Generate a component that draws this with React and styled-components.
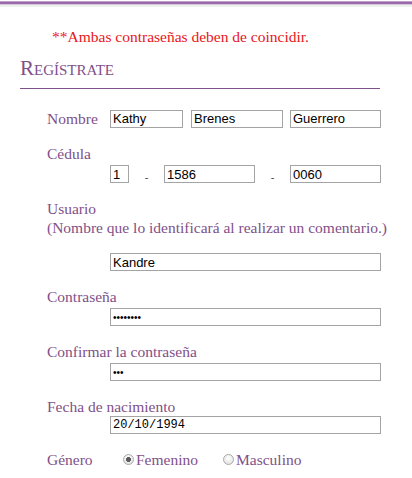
import React from 'react';
import styled, { createGlobalStyle } from 'styled-components';

const GlobalStyle = createGlobalStyle`
  html, body { margin: 0; padding: 0; background: #fff; }
  body { font-family: "Liberation Serif", "Times New Roman", serif; }
`;

const purple = '#7f5089';

export default function App() {
  return (
    <Page>
      <GlobalStyle />
      <TopBar />
      <Notice>**Ambas contraseñas deben de coincidir.</Notice>
      <Title>Regístrate</Title>
      <Form>
        <InlineRow>
          <Label $inline>Nombre</Label>
          <Input $w={73} defaultValue="Kathy" />
          <Input $w={92} $ml={8} defaultValue="Brenes" />
          <Input $w={91} $ml={7} defaultValue="Guerrero" />
        </InlineRow>

        <Group>
          <Label>Cédula</Label>
          <FieldRow>
            <Input $w={19} defaultValue="1" />
            <Dash>-</Dash>
            <Input $w={91} defaultValue="1586" />
            <Dash>-</Dash>
            <Input $w={91} defaultValue="0060" />
          </FieldRow>
        </Group>

        <Group>
          <Label>Usuario</Label>
          <Label>(Nombre que lo identificará al realizar un comentario.)</Label>
          <FieldRow $mt={16}>
            <Input $w={271} defaultValue="Kandre" />
          </FieldRow>
        </Group>

        <Group>
          <Label>Contraseña</Label>
          <FieldRow>
            <Input $w={271} $secret type="password" defaultValue="kathy123" />
          </FieldRow>
        </Group>

        <Group>
          <Label>Confirmar la contraseña</Label>
          <FieldRow>
            <Input $w={271} $secret type="password" defaultValue="abc" />
          </FieldRow>
        </Group>

        <Group>
          <Label>Fecha de nacimiento</Label>
          <FieldRow $mt={0}>
            <Input $w={271} $mono defaultValue="20/10/1994" />
          </FieldRow>
        </Group>

        <GenderRow>
          <Label $inline $w={76}>Género</Label>
          <Option>
            <Radio type="radio" name="genero" defaultChecked />
            Femenino
          </Option>
          <Option $ml={25}>
            <Radio type="radio" name="genero" />
            Masculino
          </Option>
        </GenderRow>
      </Form>
    </Page>
  );
}

const Page = styled.div`
  width: 412px;
  min-height: 478px;
  background: #fff;
`;

const TopBar = styled.div`
  height: 7px;
  background: linear-gradient(
    #ffffff 0 1px,
    #c29ccb 1px 2px,
    #9a6aa8 2px 4px,
    #d8c6dc 4px 5px,
    #eef2ef 5px 7px
  );
`;

const Notice = styled.p`
  margin: 21px 0 0 52px;
  color: #e8161b;
  font-size: 15.5px;
  line-height: 18px;
`;

const Title = styled.h1`
  margin: 10px 0 0 20px;
  width: 360px;
  padding: 0 0 8px;
  border-bottom: 1px solid ${purple};
  color: ${purple};
  font-size: 21px;
  font-weight: normal;
  font-variant: small-caps;
  line-height: 24px;
`;

const Form = styled.div`
  padding: 20px 0 0 47px;
`;

const InlineRow = styled.div`
  display: flex;
  align-items: center;
  height: 19px;
`;

const Group = styled.div`
  margin-top: 16px;
`;

const Label = styled.div`
  color: ${purple};
  font-size: 15.5px;
  line-height: 19px;
  white-space: nowrap;
  ${(p) => (p.$inline ? `width: ${p.$w || 63}px; flex: none;` : '')}
`;

const FieldRow = styled.div`
  display: flex;
  align-items: flex-start;
  margin: ${(p) => p.$mt ?? 2}px 0 0 63px;
`;

const Input = styled.input`
  box-sizing: border-box;
  width: ${(p) => p.$w}px;
  height: 18px;
  margin: 0 0 0 ${(p) => p.$ml || 0}px;
  padding: 0 2px;
  border: 1px solid #a4a4a4;
  border-radius: 0;
  background: #fff;
  color: #000;
  font-family: ${(p) => (p.$mono ? '"Liberation Mono", "Courier New", monospace' : '"Liberation Sans", Arial, sans-serif')};
  font-size: ${(p) => (p.$secret ? 10 : p.$mono ? 12 : 13)}px;
  outline: none;
`;

const Dash = styled.span`
  box-sizing: border-box;
  width: 35px;
  height: 18px;
  padding-top: 6px;
  text-align: center;
  color: #444;
  font-family: "Liberation Sans", Arial, sans-serif;
  font-size: 11px;
  line-height: 12px;
`;

const GenderRow = styled.div`
  display: flex;
  align-items: center;
  margin-top: 16px;
`;

const Option = styled.label`
  display: flex;
  align-items: center;
  margin-left: ${(p) => p.$ml || 0}px;
  color: ${purple};
  font-size: 15.5px;
  line-height: 19px;
`;

const Radio = styled.input`
  appearance: none;
  box-sizing: border-box;
  width: 11px;
  height: 11px;
  margin: 0 2px 0 0;
  border: 1px solid #a9a9a9;
  border-radius: 50%;
  background: radial-gradient(circle at 50% 35%, #ffffff, #dcdcdc);
  &:checked {
    background: radial-gradient(circle, #5a5a5a 0 2.2px, transparent 2.6px),
      radial-gradient(circle at 50% 35%, #ffffff, #dcdcdc);
  }
`;
